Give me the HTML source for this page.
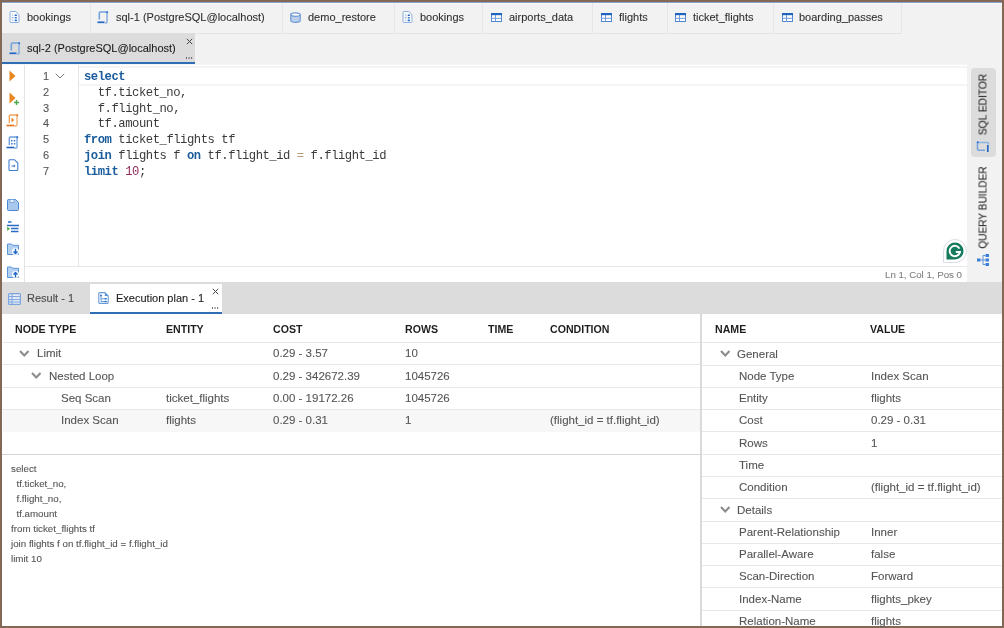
<!DOCTYPE html>
<html><head><meta charset="utf-8">
<style>
*{box-sizing:border-box;margin:0;padding:0}
html,body{width:1004px;height:628px;overflow:hidden}
body{position:relative;background:#836858;font-family:"Liberation Sans",sans-serif;font-size:11px;color:#333}
.a{position:absolute}
.t{position:absolute;white-space:pre;will-change:transform;-webkit-text-stroke:0.1px currentColor}
svg{position:absolute;overflow:visible}
.code{position:absolute;will-change:transform;font-family:"Liberation Mono",monospace;font-size:12.2px;letter-spacing:-0.45px;white-space:pre;line-height:16px;color:#3a3a3a}
.kw{color:#1a5c9c;font-weight:bold}
</style></head><body>

<div class="a" style="left:0;top:0;width:1004px;height:628px;filter:blur(0)">
<div class="a" style="left:0px;top:0px;width:1004px;height:628px;background:#836858;"></div>
<div class="a" style="left:2px;top:2px;width:1000px;height:624px;background:#f2f2f2;"></div>
<div class="a" style="left:2px;top:2px;width:1000px;height:1px;background:#84a2ca;"></div>
<div class="a" style="left:2px;top:3px;width:1000px;height:1px;background:#f9f9f7;"></div>
<div class="a" style="left:2px;top:33px;width:899px;height:1px;background:#e4e4e4;"></div>
<div class="a" style="left:90px;top:3px;width:1px;height:31px;background:#e6e6e6;"></div>
<div class="a" style="left:282px;top:3px;width:1px;height:31px;background:#e6e6e6;"></div>
<div class="a" style="left:394px;top:3px;width:1px;height:31px;background:#e6e6e6;"></div>
<div class="a" style="left:482px;top:3px;width:1px;height:31px;background:#e6e6e6;"></div>
<div class="a" style="left:592px;top:3px;width:1px;height:31px;background:#e6e6e6;"></div>
<div class="a" style="left:667px;top:3px;width:1px;height:31px;background:#e6e6e6;"></div>
<div class="a" style="left:773px;top:3px;width:1px;height:31px;background:#e6e6e6;"></div>
<div class="a" style="left:901px;top:3px;width:1px;height:31px;background:#e6e6e6;"></div>
<div class="t" style="left:27px;top:11px;font-size:11px;line-height:13.2px;color:#303030;">bookings</div>
<div class="t" style="left:116px;top:11px;font-size:11px;line-height:13.2px;color:#303030;">sql-1 (PostgreSQL@localhost)</div>
<div class="t" style="left:308px;top:11px;font-size:11px;line-height:13.2px;color:#303030;">demo_restore</div>
<div class="t" style="left:420px;top:11px;font-size:11px;line-height:13.2px;color:#303030;">bookings</div>
<div class="t" style="left:509px;top:11px;font-size:11px;line-height:13.2px;color:#303030;">airports_data</div>
<div class="t" style="left:619px;top:11px;font-size:11px;line-height:13.2px;color:#303030;">flights</div>
<div class="t" style="left:693px;top:11px;font-size:11px;line-height:13.2px;color:#303030;">ticket_flights</div>
<div class="t" style="left:799px;top:11px;font-size:11px;line-height:13.2px;color:#303030;">boarding_passes</div>
<svg style="left:8.5px;top:11px" width="11" height="12" viewBox="0 0 11 12">
<path d="M1 1.3 Q1 0.5 1.8 0.5 H6.8 L10 3.7 V10.7 Q10 11.5 9.2 11.5 H1.8 Q1 11.5 1 10.7 Z" fill="#f7f9fd" stroke="#8fb0de" stroke-width="1"/>
<rect x="3" y="3.4" width="1.3" height="1.4" fill="#b4cbea"/><rect x="5.6" y="3.5" width="2.4" height="1.6" rx=".8" fill="#1f5fc4"/>
<rect x="2.8" y="6.1" width="1.6" height="1.1" fill="#7ea3dc"/><rect x="5.6" y="5.9" width="2.4" height="1.6" rx=".8" fill="#3a7dcc"/>
<rect x="3" y="8.6" width="1.3" height="1.4" fill="#b4cbea"/><rect x="5.6" y="8.6" width="2.4" height="1.6" rx=".8" fill="#1f6fcc"/>
</svg>
<svg style="left:97px;top:10.5px;" width="12" height="13" viewBox="0 0 12 13">
<path d="M2.3 8.5 V2 Q2.3 1 3.3 1 H10.5" fill="none" stroke="#74a2dc" stroke-width="1.6"/>
<path d="M10 1.5 V11 Q10 12 9 12 H8" fill="none" stroke="#8cb2e2" stroke-width="1.6"/>
<rect x="9.2" y="0.3" width="2" height="2" rx="1" fill="#2a72cf"/>
<path d="M0.5 11.3 H7.5" stroke="#1f66c6" stroke-width="1.7"/>
</svg>
<svg style="left:290px;top:12px" width="11" height="11" viewBox="0 0 11 11">
<path d="M0.8 2.5 V8.5 Q0.8 10.3 5.5 10.3 Q10.2 10.3 10.2 8.5 V2.5" fill="#b9cfec" stroke="#6f9ad6" stroke-width="1.2"/>
<ellipse cx="5.5" cy="2.6" rx="4.7" ry="1.8" fill="#fff" stroke="#6f9ad6" stroke-width="1.2"/>
</svg>
<svg style="left:401.5px;top:11px" width="11" height="12" viewBox="0 0 11 12">
<path d="M1 1.3 Q1 0.5 1.8 0.5 H6.8 L10 3.7 V10.7 Q10 11.5 9.2 11.5 H1.8 Q1 11.5 1 10.7 Z" fill="#f7f9fd" stroke="#8fb0de" stroke-width="1"/>
<rect x="3" y="3.4" width="1.3" height="1.4" fill="#b4cbea"/><rect x="5.6" y="3.5" width="2.4" height="1.6" rx=".8" fill="#1f5fc4"/>
<rect x="2.8" y="6.1" width="1.6" height="1.1" fill="#7ea3dc"/><rect x="5.6" y="5.9" width="2.4" height="1.6" rx=".8" fill="#3a7dcc"/>
<rect x="3" y="8.6" width="1.3" height="1.4" fill="#b4cbea"/><rect x="5.6" y="8.6" width="2.4" height="1.6" rx=".8" fill="#1f6fcc"/>
</svg>
<svg style="left:491px;top:13px" width="11" height="9" viewBox="0 0 11 9">
<rect x="0.5" y="0.5" width="10" height="8" fill="#fff" stroke="#4f86d2" stroke-width="1"/>
<rect x="0" y="0" width="11" height="2.2" fill="#1f63bf"/>
<path d="M4.5 2 V9 M0 5.3 H11" stroke="#6d9ad8" stroke-width="1"/>
</svg>
<svg style="left:600.5px;top:13px" width="11" height="9" viewBox="0 0 11 9">
<rect x="0.5" y="0.5" width="10" height="8" fill="#fff" stroke="#4f86d2" stroke-width="1"/>
<rect x="0" y="0" width="11" height="2.2" fill="#1f63bf"/>
<path d="M4.5 2 V9 M0 5.3 H11" stroke="#6d9ad8" stroke-width="1"/>
</svg>
<svg style="left:675px;top:13px" width="11" height="9" viewBox="0 0 11 9">
<rect x="0.5" y="0.5" width="10" height="8" fill="#fff" stroke="#4f86d2" stroke-width="1"/>
<rect x="0" y="0" width="11" height="2.2" fill="#1f63bf"/>
<path d="M4.5 2 V9 M0 5.3 H11" stroke="#6d9ad8" stroke-width="1"/>
</svg>
<svg style="left:781.5px;top:13px" width="11" height="9" viewBox="0 0 11 9">
<rect x="0.5" y="0.5" width="10" height="8" fill="#fff" stroke="#4f86d2" stroke-width="1"/>
<rect x="0" y="0" width="11" height="2.2" fill="#1f63bf"/>
<path d="M4.5 2 V9 M0 5.3 H11" stroke="#6d9ad8" stroke-width="1"/>
</svg>
<div class="a" style="left:2px;top:33px;width:193px;height:29px;background:#dcdcdc;"></div>
<div class="a" style="left:2px;top:62px;width:193px;height:2px;background:#2f6db5;"></div>
<div class="t" style="left:27px;top:42px;font-size:11px;line-height:13.2px;color:#1a1a1a;">sql-2 (PostgreSQL@localhost)</div>
<svg style="left:9px;top:41.5px;" width="12" height="13" viewBox="0 0 12 13">
<path d="M2.3 8.5 V2 Q2.3 1 3.3 1 H10.5" fill="none" stroke="#74a2dc" stroke-width="1.6"/>
<path d="M10 1.5 V11 Q10 12 9 12 H8" fill="none" stroke="#8cb2e2" stroke-width="1.6"/>
<rect x="9.2" y="0.3" width="2" height="2" rx="1" fill="#2a72cf"/>
<path d="M0.5 11.3 H7.5" stroke="#1f66c6" stroke-width="1.7"/>
</svg>
<svg style="left:185.5px;top:37.5px" width="7" height="7" viewBox="0 0 7 7"><path d="M0.8 0.8 L6.2 6.2 M6.2 0.8 L0.8 6.2" stroke="#444" stroke-width="1"/></svg>
<div class="a" style="left:185px;top:57px;width:8px;height:2px;background:radial-gradient(circle,#555 0.7px,transparent 0.9px) 0 0/2.7px 2px repeat-x"></div>
<div class="a" style="left:2px;top:64px;width:965px;height:1px;background:#f6f6f6;"></div>
<div class="a" style="left:2px;top:65px;width:965px;height:217px;background:#fff;"></div>
<div class="a" style="left:24px;top:65px;width:1px;height:217px;background:#e4e4e4;"></div>
<div class="a" style="left:78px;top:65px;width:1px;height:201px;background:#e4e4e4;"></div>
<div class="a" style="left:25px;top:266px;width:942px;height:1px;background:#e8e8e8;"></div>
<div class="a" style="left:79px;top:66px;width:888px;height:2px;background:#f5f5f5;"></div>
<div class="a" style="left:79px;top:84px;width:888px;height:2px;background:#f5f5f5;"></div>
<div class="code" style="left:84px;top:69px"><span class="kw">select</span></div>
<div class="code" style="left:84px;top:85px">  tf.ticket_no,</div>
<div class="code" style="left:84px;top:101px">  f.flight_no,</div>
<div class="code" style="left:84px;top:116px">  tf.amount</div>
<div class="code" style="left:84px;top:132px"><span class="kw">from</span> ticket_flights tf</div>
<div class="code" style="left:84px;top:148px"><span class="kw">join</span> flights f <span class="kw">on</span> tf.flight_id <span style="color:#b39c7c">=</span> f.flight_id</div>
<div class="code" style="left:84px;top:164px"><span class="kw">limit</span> <span style="color:#922a5c">10</span>;</div>
<div class="t" style="left:42.5px;top:70px;font-size:11px;line-height:13.2px;color:#555;">1</div>
<div class="t" style="left:42.5px;top:86px;font-size:11px;line-height:13.2px;color:#555;">2</div>
<div class="t" style="left:42.5px;top:102px;font-size:11px;line-height:13.2px;color:#555;">3</div>
<div class="t" style="left:42.5px;top:117px;font-size:11px;line-height:13.2px;color:#555;">4</div>
<div class="t" style="left:42.5px;top:133px;font-size:11px;line-height:13.2px;color:#555;">5</div>
<div class="t" style="left:42.5px;top:149px;font-size:11px;line-height:13.2px;color:#555;">6</div>
<div class="t" style="left:42.5px;top:165px;font-size:11px;line-height:13.2px;color:#555;">7</div>
<svg style="left:55px;top:73px" width="10" height="6" viewBox="0 0 10 6"><path d="M0.8 0.8 L5 5 L9.2 0.8" fill="none" stroke="#777" stroke-width="1"/></svg>
<div class="t" style="left:884.5px;top:269px;font-size:9.7px;line-height:11.64px;color:#808080;">Ln 1, Col 1, Pos 0</div>
<div class="a" style="left:967px;top:64px;width:35px;height:218px;background:#f2f2f2;"></div>
<div class="a" style="left:971px;top:68px;width:25px;height:89px;background:#dcdcdc;border-radius:4px"></div>
<svg style="left:943px;top:238.5px" width="24" height="24" viewBox="0 0 24 24">
<path d="M12 0.5 A11.5 11.5 0 0 1 23.5 12 A11.5 11.5 0 0 1 12 23.5 H0.5 V12 A11.5 11.5 0 0 1 12 0.5 Z" fill="#fff" stroke="#dcdce6" stroke-width="1"/>
<path d="M12 3.5 A8.5 8.5 0 1 1 12 20.5 H3.5 V12 A8.5 8.5 0 0 1 12 3.5 Z" fill="#167a5f"/>
<path d="M16.5 9.6 A5.2 5.2 0 1 0 17 13 H12.8" fill="none" stroke="#fff" stroke-width="1.9"/>
</svg>
<svg style="left:9px;top:70px" width="7" height="12" viewBox="0 0 7 12"><path d="M0.5 0.5 L6.5 6 L0.5 11.5 Z" fill="#e8861f"/></svg>
<svg style="left:9px;top:92px" width="11" height="13" viewBox="0 0 11 13"><path d="M0.5 0.5 L6.5 6 L0.5 11.5 Z" fill="#e8861f"/><path d="M7.5 8 V13 M5 10.5 H10" stroke="#4caa4c" stroke-width="1.4"/></svg>
<svg style="left:6px;top:114px" width="13" height="13" viewBox="0 0 13 13">
<path d="M3.3 9 V2 Q3.3 1 4.3 1 H11.5" fill="none" stroke="#f0a660" stroke-width="1.4"/>
<path d="M11 1.5 V11 Q11 12 10 12 H8" fill="none" stroke="#f3b47a" stroke-width="1.4"/>
<rect x="10.3" y="0.3" width="2" height="2" rx="1" fill="#e8761c"/>
<path d="M0.5 11.5 H8" stroke="#e86f1a" stroke-width="1.6"/>
<path d="M5.5 3.8 L8.3 6 L5.5 8.2 Z" fill="#e8801c"/></svg>
<svg style="left:6px;top:136px" width="13" height="13" viewBox="0 0 13 13">
<path d="M3.3 9 V2 Q3.3 1 4.3 1 H11.5" fill="none" stroke="#6e9edc" stroke-width="1.4"/>
<path d="M11 1.5 V11 Q11 12 10 12 H8" fill="none" stroke="#7ba8e0" stroke-width="1.4"/>
<rect x="10.3" y="0.3" width="2" height="2" rx="1" fill="#2a6ccc"/>
<path d="M0.5 11.5 H8" stroke="#1f62c0" stroke-width="1.6"/>
<rect x="5" y="4" width="1.5" height="1.5" fill="#3b78cc"/><rect x="7.8" y="4" width="1.5" height="1.5" fill="#3b78cc"/>
<rect x="5" y="7" width="1.5" height="1.5" fill="#3b78cc"/><rect x="7.8" y="7" width="1.5" height="1.5" fill="#3b78cc"/></svg>
<svg style="left:7.5px;top:158.5px" width="11" height="12" viewBox="0 0 11 12">
<path d="M1 1.5 Q1 0.7 1.8 0.7 H6.5 L9.8 4 V10.8 Q9.8 11.5 9 11.5 H1.8 Q1 11.5 1 10.8 Z" fill="#fff" stroke="#3f7fd0" stroke-width="1.1"/>
<path d="M3.5 7 H6.5" stroke="#5f95d8" stroke-width="1.2"/><path d="M5.8 5.5 L7.5 7 L5.8 8.5 Z" fill="#3070c8"/></svg>
<svg style="left:7px;top:198.5px" width="12" height="12" viewBox="0 0 12 12">
<path d="M0.5 1.5 Q0.5 0.5 1.5 0.5 H8.5 L11.5 3.5 V10.5 Q11.5 11.5 10.5 11.5 H1.5 Q0.5 11.5 0.5 10.5 Z" fill="#a9c8ec" stroke="#4a88d4" stroke-width="1"/>
<rect x="3" y="0.5" width="4" height="3" fill="#e6eef9" stroke="#6a9ad8" stroke-width=".7"/></svg>
<svg style="left:7px;top:221px" width="12" height="12" viewBox="0 0 12 12">
<path d="M1 1 H4.5 M0 4.5 H12 M4 7.5 H11.5 M4 10.5 H11.5" stroke="#2a6cc8" stroke-width="1.3"/>
<path d="M0.2 5.8 L3 7.8 L0.2 9.8 Z" fill="#3ea83e"/></svg>
<svg style="left:7px;top:243px" width="12" height="12" viewBox="0 0 12 12">
<path d="M0.5 1 H4.5 L5.8 2.3 H11.5 V11.5 H0.5 Z" fill="#b4d0f0" stroke="#5b93d8" stroke-width="1"/>
<circle cx="8.5" cy="8.5" r="3.5" fill="#fff"/><path d="M8.5 5.8 V10.5 M6.5 8.5 L8.5 10.6 L10.5 8.5" fill="none" stroke="#1f66c6" stroke-width="1.4"/></svg>
<svg style="left:7px;top:265.5px" width="12" height="12" viewBox="0 0 12 12">
<path d="M0.5 1 H4.5 L5.8 2.3 H11.5 V11.5 H0.5 Z" fill="#b4d0f0" stroke="#5b93d8" stroke-width="1"/>
<circle cx="8.5" cy="8.5" r="3.5" fill="#fff"/><path d="M8.5 11.5 V6.5 M6.5 8.5 L8.5 6.4 L10.5 8.5" fill="none" stroke="#1f66c6" stroke-width="1.4"/></svg>

<div class="t" style="left:983px;top:103.5px;width:0;height:0"><div style="position:absolute;left:-40px;top:-6.5px;width:80px;height:13px;line-height:13px;text-align:center;font-size:11px;color:#2a2a2a;-webkit-text-stroke:0.1px #2a2a2a;transform:rotate(-90deg) scaleX(0.93)">SQL EDITOR</div></div>
<div class="t" style="left:983px;top:206.5px;width:0;height:0"><div style="position:absolute;left:-50px;top:-6.5px;width:100px;height:13px;line-height:13px;text-align:center;font-size:11px;color:#2a2a2a;-webkit-text-stroke:0.1px #2a2a2a;transform:rotate(-90deg) scaleX(0.92)">QUERY BUILDER</div></div>
<svg style="left:977px;top:140px;transform:rotate(-90deg);" width="12" height="13" viewBox="0 0 12 13">
<path d="M2.3 8.5 V2 Q2.3 1 3.3 1 H10.5" fill="none" stroke="#74a2dc" stroke-width="1.6"/>
<path d="M10 1.5 V11 Q10 12 9 12 H8" fill="none" stroke="#8cb2e2" stroke-width="1.6"/>
<rect x="9.2" y="0.3" width="2" height="2" rx="1" fill="#2a72cf"/>
<path d="M0.5 11.3 H7.5" stroke="#1f66c6" stroke-width="1.7"/>
</svg>
<svg style="left:977px;top:253.5px" width="12" height="12" viewBox="0 0 12 12">
<rect x="0" y="4.5" width="3.5" height="3" fill="#3d7fd6"/>
<rect x="8.5" y="0" width="3.5" height="3" fill="#3d7fd6"/><rect x="8.5" y="4.5" width="3.5" height="3" fill="#3d7fd6"/><rect x="8.5" y="9" width="3.5" height="3" fill="#3d7fd6"/>
<path d="M3.5 6 H8.5 M6 1.5 V10.5 M6 1.5 H8.5 M6 10.5 H8.5" stroke="#5a93dc" stroke-width="1"/></svg>
<div class="a" style="left:2px;top:282px;width:1000px;height:32px;background:#dcdcdc;"></div>
<div class="a" style="left:90px;top:284px;width:132px;height:30px;background:#fff;"></div>
<div class="a" style="left:90px;top:312px;width:132px;height:2px;background:#2f6db5;"></div>
<div class="t" style="left:27.4px;top:292px;font-size:11px;line-height:13.2px;color:#484848;">Result - 1</div>
<div class="t" style="left:116px;top:292px;font-size:11px;line-height:13.2px;color:#1c1c1c;">Execution plan - 1</div>
<svg style="left:8px;top:292.5px" width="13" height="12" viewBox="0 0 13 12">
<rect x="0.6" y="0.6" width="11.8" height="10.8" rx="1" fill="#e6edf7" stroke="#7aa3dc" stroke-width="1.1"/>
<path d="M4 0.6 V11.4 M0.6 3.6 H12.4 M0.6 6.6 H12.4 M0.6 9 H12.4" stroke="#7aa3dc" stroke-width="1"/></svg>
<svg style="left:98px;top:292px" width="11" height="12" viewBox="0 0 11 12">
<path d="M0.8 1.3 Q0.8 0.6 1.5 0.6 H6.8 L10.2 4 V10.8 Q10.2 11.4 9.5 11.4 H1.5 Q0.8 11.4 0.8 10.8 Z" fill="#fff" stroke="#6a9bd9" stroke-width="1.1"/>
<path d="M6.8 0.6 V4 H10.2" fill="#5a90d8"/>
<circle cx="3" cy="3.5" r="1" fill="#2f74cf"/><path d="M3 4 V9.5 H7 M3 6.8 H7" fill="none" stroke="#6a9bd9" stroke-width="1"/>
<rect x="6.5" y="6.1" width="2.4" height="1.4" rx=".7" fill="#2f74cf"/><rect x="6.5" y="8.8" width="2.4" height="1.4" rx=".7" fill="#2f74cf"/></svg>
<svg style="left:211.5px;top:287.5px" width="7" height="7" viewBox="0 0 7 7"><path d="M0.8 0.8 L6.2 6.2 M6.2 0.8 L0.8 6.2" stroke="#444" stroke-width="1"/></svg>
<div class="a" style="left:211.3px;top:307px;width:8px;height:2px;background:radial-gradient(circle,#555 0.7px,transparent 0.9px) 0 0/2.7px 2px repeat-x"></div>
<div class="a" style="left:2px;top:314px;width:1000px;height:312px;background:#fff;"></div>
<div class="a" style="left:700px;top:314px;width:2px;height:312px;background:#dadada;"></div>
<div class="t" style="left:14.7px;top:323px;font-size:10.6px;line-height:12.72px;color:#1e1e1e;font-weight:bold;-webkit-text-stroke:0;">NODE TYPE</div>
<div class="t" style="left:165.5px;top:323px;font-size:10.6px;line-height:12.72px;color:#1e1e1e;font-weight:bold;-webkit-text-stroke:0;">ENTITY</div>
<div class="t" style="left:273.1px;top:323px;font-size:10.6px;line-height:12.72px;color:#1e1e1e;font-weight:bold;-webkit-text-stroke:0;">COST</div>
<div class="t" style="left:404.5px;top:323px;font-size:10.6px;line-height:12.72px;color:#1e1e1e;font-weight:bold;-webkit-text-stroke:0;">ROWS</div>
<div class="t" style="left:488px;top:323px;font-size:10.6px;line-height:12.72px;color:#1e1e1e;font-weight:bold;-webkit-text-stroke:0;">TIME</div>
<div class="t" style="left:549.7px;top:323px;font-size:10.6px;line-height:12.72px;color:#1e1e1e;font-weight:bold;-webkit-text-stroke:0;">CONDITION</div>
<div class="t" style="left:715px;top:323px;font-size:10.6px;line-height:12.72px;color:#1e1e1e;font-weight:bold;-webkit-text-stroke:0;">NAME</div>
<div class="t" style="left:870px;top:323px;font-size:10.6px;line-height:12.72px;color:#1e1e1e;font-weight:bold;-webkit-text-stroke:0;">VALUE</div>
<div class="a" style="left:3px;top:409px;width:697px;height:23px;background:#f7f7f7;"></div>
<div class="a" style="left:2px;top:342px;width:698px;height:1px;background:#e8e8e8;"></div>
<div class="a" style="left:2px;top:364px;width:698px;height:1px;background:#e8e8e8;"></div>
<div class="a" style="left:2px;top:387px;width:698px;height:1px;background:#e8e8e8;"></div>
<div class="a" style="left:2px;top:409px;width:698px;height:1px;background:#e8e8e8;"></div>
<div class="a" style="left:2px;top:454px;width:698px;height:1px;background:#d4d4d4;"></div>
<div class="t" style="left:36.9px;top:347px;font-size:11.5px;line-height:13.8px;color:#555;">Limit</div>
<div class="t" style="left:273.1px;top:347px;font-size:11.5px;line-height:13.8px;color:#555;">0.29 - 3.57</div>
<div class="t" style="left:404.5px;top:347px;font-size:11.5px;line-height:13.8px;color:#555;">10</div>
<div class="t" style="left:48.7px;top:370px;font-size:11.5px;line-height:13.8px;color:#555;">Nested Loop</div>
<div class="t" style="left:273.1px;top:370px;font-size:11.5px;line-height:13.8px;color:#555;">0.29 - 342672.39</div>
<div class="t" style="left:404.5px;top:370px;font-size:11.5px;line-height:13.8px;color:#555;">1045726</div>
<div class="t" style="left:60.8px;top:392px;font-size:11.5px;line-height:13.8px;color:#555;">Seq Scan</div>
<div class="t" style="left:165.5px;top:392px;font-size:11.5px;line-height:13.8px;color:#555;">ticket_flights</div>
<div class="t" style="left:273.1px;top:392px;font-size:11.5px;line-height:13.8px;color:#555;">0.00 - 19172.26</div>
<div class="t" style="left:404.5px;top:392px;font-size:11.5px;line-height:13.8px;color:#555;">1045726</div>
<div class="t" style="left:60.8px;top:414px;font-size:11.5px;line-height:13.8px;color:#555;">Index Scan</div>
<div class="t" style="left:165.5px;top:414px;font-size:11.5px;line-height:13.8px;color:#555;">flights</div>
<div class="t" style="left:273.1px;top:414px;font-size:11.5px;line-height:13.8px;color:#555;">0.29 - 0.31</div>
<div class="t" style="left:404.5px;top:414px;font-size:11.5px;line-height:13.8px;color:#555;">1</div>
<div class="t" style="left:549.7px;top:414px;font-size:11.5px;line-height:13.8px;color:#555;">(flight_id = tf.flight_id)</div>
<svg style="left:18.6px;top:349.6px" width="11" height="7" viewBox="0 0 11 7"><path d="M1 1 L5.25 5.4 L9.5 1" fill="none" stroke="#8c8c8c" stroke-width="2.1"/></svg>
<svg style="left:30.6px;top:372.4px" width="11" height="7" viewBox="0 0 11 7"><path d="M1 1 L5.25 5.4 L9.5 1" fill="none" stroke="#8c8c8c" stroke-width="2.1"/></svg>
<div class="a" style="left:702px;top:342px;width:300px;height:1px;background:#e8e8e8;"></div>
<svg style="left:719.5px;top:350.3px" width="11" height="7" viewBox="0 0 11 7"><path d="M1 1 L5.25 5.4 L9.5 1" fill="none" stroke="#8c8c8c" stroke-width="2.1"/></svg>
<div class="t" style="left:737px;top:348px;font-size:11.5px;line-height:13.8px;color:#555;">General</div>
<div class="a" style="left:702px;top:365px;width:300px;height:1px;background:#e8e8e8;"></div>
<div class="t" style="left:738.5px;top:370px;font-size:11.5px;line-height:13.8px;color:#555;">Node Type</div>
<div class="t" style="left:870.5px;top:370px;font-size:11.5px;line-height:13.8px;color:#555;">Index Scan</div>
<div class="a" style="left:702px;top:387px;width:300px;height:1px;background:#e8e8e8;"></div>
<div class="t" style="left:738.5px;top:392px;font-size:11.5px;line-height:13.8px;color:#555;">Entity</div>
<div class="t" style="left:870.5px;top:392px;font-size:11.5px;line-height:13.8px;color:#555;">flights</div>
<div class="a" style="left:702px;top:409px;width:300px;height:1px;background:#e8e8e8;"></div>
<div class="t" style="left:738.5px;top:414px;font-size:11.5px;line-height:13.8px;color:#555;">Cost</div>
<div class="t" style="left:870.5px;top:414px;font-size:11.5px;line-height:13.8px;color:#555;">0.29 - 0.31</div>
<div class="a" style="left:702px;top:431px;width:300px;height:1px;background:#e8e8e8;"></div>
<div class="t" style="left:738.5px;top:437px;font-size:11.5px;line-height:13.8px;color:#555;">Rows</div>
<div class="t" style="left:870.5px;top:437px;font-size:11.5px;line-height:13.8px;color:#555;">1</div>
<div class="a" style="left:702px;top:454px;width:300px;height:1px;background:#e8e8e8;"></div>
<div class="t" style="left:738.5px;top:459px;font-size:11.5px;line-height:13.8px;color:#555;">Time</div>
<div class="a" style="left:702px;top:476px;width:300px;height:1px;background:#e8e8e8;"></div>
<div class="t" style="left:738.5px;top:481px;font-size:11.5px;line-height:13.8px;color:#555;">Condition</div>
<div class="t" style="left:870.5px;top:481px;font-size:11.5px;line-height:13.8px;color:#555;">(flight_id = tf.flight_id)</div>
<div class="a" style="left:702px;top:498px;width:300px;height:1px;background:#e8e8e8;"></div>
<svg style="left:719.5px;top:506.33000000000004px" width="11" height="7" viewBox="0 0 11 7"><path d="M1 1 L5.25 5.4 L9.5 1" fill="none" stroke="#8c8c8c" stroke-width="2.1"/></svg>
<div class="t" style="left:737px;top:504px;font-size:11.5px;line-height:13.8px;color:#555;">Details</div>
<div class="a" style="left:702px;top:521px;width:300px;height:1px;background:#e8e8e8;"></div>
<div class="t" style="left:738.5px;top:526px;font-size:11.5px;line-height:13.8px;color:#555;">Parent-Relationship</div>
<div class="t" style="left:870.5px;top:526px;font-size:11.5px;line-height:13.8px;color:#555;">Inner</div>
<div class="a" style="left:702px;top:543px;width:300px;height:1px;background:#e8e8e8;"></div>
<div class="t" style="left:738.5px;top:548px;font-size:11.5px;line-height:13.8px;color:#555;">Parallel-Aware</div>
<div class="t" style="left:870.5px;top:548px;font-size:11.5px;line-height:13.8px;color:#555;">false</div>
<div class="a" style="left:702px;top:565px;width:300px;height:1px;background:#e8e8e8;"></div>
<div class="t" style="left:738.5px;top:570px;font-size:11.5px;line-height:13.8px;color:#555;">Scan-Direction</div>
<div class="t" style="left:870.5px;top:570px;font-size:11.5px;line-height:13.8px;color:#555;">Forward</div>
<div class="a" style="left:702px;top:587px;width:300px;height:1px;background:#e8e8e8;"></div>
<div class="t" style="left:738.5px;top:593px;font-size:11.5px;line-height:13.8px;color:#555;">Index-Name</div>
<div class="t" style="left:870.5px;top:593px;font-size:11.5px;line-height:13.8px;color:#555;">flights_pkey</div>
<div class="a" style="left:702px;top:610px;width:300px;height:1px;background:#e8e8e8;"></div>
<div class="t" style="left:738.5px;top:615px;font-size:11.5px;line-height:13.8px;color:#555;">Relation-Name</div>
<div class="t" style="left:870.5px;top:615px;font-size:11.5px;line-height:13.8px;color:#555;">flights</div>
<div class="a" style="left:702px;top:632px;width:300px;height:1px;background:#e8e8e8;"></div>
<div class="t" style="left:11.4px;top:463px;font-size:9.75px;line-height:11.7px;color:#555;">select</div>
<div class="t" style="left:11.4px;top:478px;font-size:9.75px;line-height:11.7px;color:#555;">  tf.ticket_no,</div>
<div class="t" style="left:11.4px;top:493px;font-size:9.75px;line-height:11.7px;color:#555;">  f.flight_no,</div>
<div class="t" style="left:11.4px;top:508px;font-size:9.75px;line-height:11.7px;color:#555;">  tf.amount</div>
<div class="t" style="left:11.4px;top:523px;font-size:9.75px;line-height:11.7px;color:#555;">from ticket_flights tf</div>
<div class="t" style="left:11.4px;top:538px;font-size:9.75px;line-height:11.7px;color:#555;">join flights f on tf.flight_id = f.flight_id</div>
<div class="t" style="left:11.4px;top:553px;font-size:9.75px;line-height:11.7px;color:#555;">limit 10</div>
</div></body></html>
